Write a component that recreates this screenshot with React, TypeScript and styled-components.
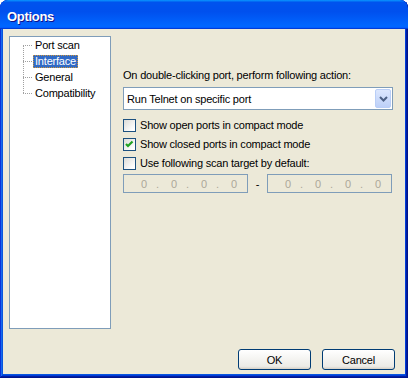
import React from "react";
import styled, { createGlobalStyle } from "styled-components";

const GlobalStyle = createGlobalStyle`
  html, body {
    margin: 0;
    padding: 0;
    background: #ffffff;
  }
  body {
    font-family: "Liberation Sans", Arial, sans-serif;
    font-size: 11px;
    letter-spacing: -0.2px;
    color: #000000;
  }
`;

const Window = styled.div`
  width: 408px;
  height: 378px;
  box-sizing: border-box;
  display: flex;
  flex-direction: column;
  padding: 0 3px 4px 3px;
  background: #0855dd;
  border-radius: 8px 8px 0 0;
  overflow: hidden;
  box-shadow: inset -1px -1px #00138c, inset 1px 1px #0831d9,
    inset -2px -2px #001ea0, inset 2px 2px #166aee,
    inset -3px -3px #003bda, inset 3px 3px #0855dd;
`;

const TitleBar = styled.div`
  flex: none;
  height: 29px;
  margin: 0 -3px;
  padding: 3px 0 0 7px;
  box-sizing: border-box;
  display: flex;
  align-items: center;
  border-radius: 8px 8px 0 0;
  background: linear-gradient(
    180deg,
    #0997ff,
    #0053ee 8%,
    #0050ee 40%,
    #0066ff 88%,
    #0066ff 93%,
    #005bff 95%,
    #003dd7 96%,
    #003dd7
  );
`;

const Title = styled.span`
  font-family: "Liberation Sans", Arial, sans-serif;
  font-weight: bold;
  font-size: 13px;
  color: #ffffff;
  text-shadow: 1px 1px #0f1089;
  letter-spacing: -0.3px;
`;

const Client = styled.div`
  flex: 1;
  display: flex;
  flex-direction: column;
  padding: 7px 0 0 6px;
  background: #ece9d8;
`;

const Body = styled.div`
  display: flex;
  height: 293px;
`;

const TreeBox = styled.div`
  width: 102px;
  height: 293px;
  box-sizing: border-box;
  border: 1px solid #7f9db9;
  background: #ffffff;
`;

const TreeList = styled.div`
  position: relative;
  margin-left: 13px;

  &::before {
    content: "";
    position: absolute;
    left: 0;
    top: 8px;
    bottom: 8px;
    border-left: 1px dotted #a0a0a0;
  }
`;

const TreeRow = styled.div`
  height: 16px;
  display: flex;
  align-items: center;

  &::before {
    content: "";
    width: 9px;
    margin-right: 1px;
    border-top: 1px dotted #a0a0a0;
  }
`;

const TreeLabel = styled.span<{ $selected?: boolean }>`
  line-height: 11px;
  padding: 0 1px;
  border: 1px dotted ${(p) => (p.$selected ? "#ce953a" : "transparent")};
  background: ${(p) => (p.$selected ? "#316ac5" : "transparent")};
  color: ${(p) => (p.$selected ? "#ffffff" : "#000000")};
  white-space: nowrap;
`;

const Panel = styled.div`
  flex: 1;
  display: flex;
  flex-direction: column;
  padding: 33px 0 0 12px;
`;

const Label = styled.div`
  line-height: 13px;
  margin-bottom: 5px;
`;

const Combo = styled.div`
  width: 270px;
  height: 23px;
  box-sizing: border-box;
  border: 1px solid #7f9db9;
  background: #ffffff;
  display: flex;
  align-items: center;
  padding-left: 3px;
`;

const ComboText = styled.span`
  flex: 1;
`;

const ComboButton = styled.div`
  width: 16px;
  height: 19px;
  margin-right: 1px;
  box-sizing: border-box;
  border: 1px solid #b9cef7;
  border-radius: 2px;
  background: linear-gradient(180deg, #dce7fe, #bdd0f8);
  display: flex;
  align-items: center;
  justify-content: center;
`;

const Checks = styled.div`
  display: flex;
  flex-direction: column;
  gap: 6px;
  margin-top: 9px;
`;

const CheckRow = styled.label`
  display: flex;
  align-items: center;
  height: 13px;
  line-height: 13px;
`;

const Box = styled.span`
  width: 13px;
  height: 13px;
  box-sizing: border-box;
  flex: none;
  border: 1px solid #1c5180;
  background: linear-gradient(135deg, #dcdcd7, #ffffff 85%);
  margin-right: 4px;
  display: flex;
`;

const IpRow = styled.div`
  display: flex;
  align-items: center;
  margin-top: 4px;
`;

const IpField = styled.div`
  width: 125px;
  height: 19px;
  box-sizing: border-box;
  border: 1px solid #7f9db9;
  background: #ece9d8;
  color: #aca899;
  display: flex;
  align-items: center;
  padding-left: 17px;
`;

const Octet = styled.span`
  width: 6px;
  margin-right: 9px;
`;

const Dot = styled.span`
  width: 3px;
  margin-right: 12px;
`;

const Dash = styled.span`
  width: 19px;
  text-align: center;
`;

const Footer = styled.div`
  display: flex;
  justify-content: flex-end;
  gap: 11px;
  margin-top: 20px;
  padding-right: 10px;
`;

const Button = styled.button`
  width: 73px;
  height: 21px;
  box-sizing: border-box;
  padding: 0;
  border: 1px solid #003c74;
  border-radius: 3px;
  background: linear-gradient(180deg, #ffffff, #ecebe6 86%, #d6d0c5);
  font-family: "Liberation Sans", Arial, sans-serif;
  font-size: 11px;
  letter-spacing: -0.2px;
  color: #000000;
`;

const Check = () => (
  <svg width="11" height="11" viewBox="0 0 11 11">
    <polyline
      points="2,5 4,7 8.5,2.5"
      fill="none"
      stroke="#21a121"
      strokeWidth="2.2"
    />
  </svg>
);

const Arrow = () => (
  <svg width="9" height="6" viewBox="0 0 9 6">
    <polyline
      points="1,1 4.5,4.5 8,1"
      fill="none"
      stroke="#4d6185"
      strokeWidth="2"
    />
  </svg>
);

const Ip = () => (
  <IpField>
    <Octet>0</Octet>
    <Dot>.</Dot>
    <Octet>0</Octet>
    <Dot>.</Dot>
    <Octet>0</Octet>
    <Dot>.</Dot>
    <Octet>0</Octet>
  </IpField>
);

const pages = ["Port scan", "Interface", "General", "Compatibility"];

const options = [
  { text: "Show open ports in compact mode", checked: false },
  { text: "Show closed ports in compact mode", checked: true },
  { text: "Use following scan target by default:", checked: false },
];

export default function App() {
  return (
    <>
      <GlobalStyle />
      <Window>
        <TitleBar>
          <Title>Options</Title>
        </TitleBar>
        <Client>
          <Body>
            <TreeBox>
              <TreeList>
                {pages.map((p) => (
                  <TreeRow key={p}>
                    <TreeLabel $selected={p === "Interface"}>{p}</TreeLabel>
                  </TreeRow>
                ))}
              </TreeList>
            </TreeBox>
            <Panel>
              <Label>On double-clicking port, perform following action:</Label>
              <Combo>
                <ComboText>Run Telnet on specific port</ComboText>
                <ComboButton>
                  <Arrow />
                </ComboButton>
              </Combo>
              <Checks>
                {options.map((o) => (
                  <CheckRow key={o.text}>
                    <Box>{o.checked && <Check />}</Box>
                    {o.text}
                  </CheckRow>
                ))}
              </Checks>
              <IpRow>
                <Ip />
                <Dash>-</Dash>
                <Ip />
              </IpRow>
            </Panel>
          </Body>
          <Footer>
            <Button>OK</Button>
            <Button>Cancel</Button>
          </Footer>
        </Client>
      </Window>
    </>
  );
}
